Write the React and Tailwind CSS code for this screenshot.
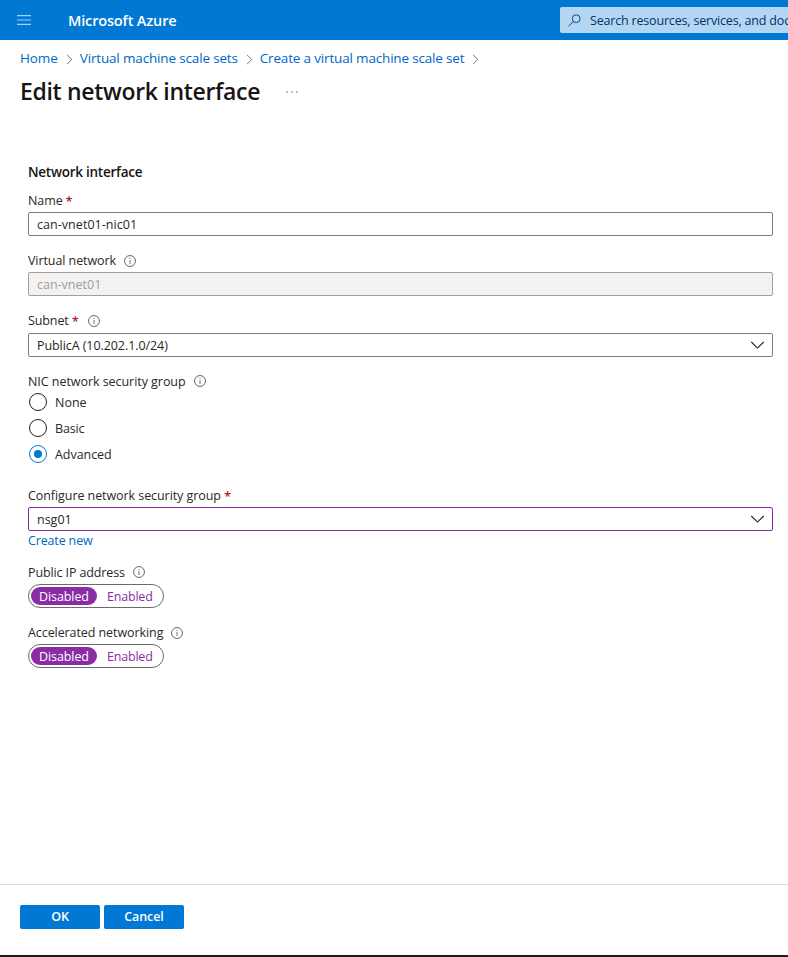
import React from "react";

function InfoIcon({ className = "" }) {
  return (
    <svg className={`h-3 w-3 shrink-0 ${className}`} viewBox="0 0 12 12" fill="none">
      <circle cx="6" cy="6" r="5.45" stroke="#605e5c" strokeWidth="0.95" />
      <path d="M6 5V9" stroke="#8a8886" strokeWidth="1.2" />
      <path d="M6 3V4" stroke="#8a8886" strokeWidth="1.2" />
    </svg>
  );
}

function Crumb({ children, className }) {
  return (
    <a className="flex items-center">
      <span className={`text-[13.5px] text-[#0067c5] ${className}`}>{children}</span>
      <svg className="mt-0.5 ml-2 mr-[7px] h-[11px] w-[7px]" viewBox="0 0 7 11" fill="none">
        <path d="M1 0.8L5.8 5.5L1 10.2" stroke="#706e6c" strokeWidth="0.95" />
      </svg>
    </a>
  );
}

function Label({ children, tracking, required, info, iconShift = "mt-[2px]" }) {
  return (
    <div className="flex h-6 items-center">
      <span className={`pt-[2px] ${tracking}`}>{children}</span>
      {required && <span className="ml-[3px] pt-[2px] text-[13px] font-semibold text-[#a4262c]">*</span>}
      {info && <InfoIcon className={`${iconShift} ${required ? "ml-[9px]" : "ml-2"}`} />}
    </div>
  );
}

function Field({ children, className, tracking, select }) {
  return (
    <div className={`flex h-6 items-center justify-between rounded-[2px] border pr-[7px] pl-2 ${className}`}>
      <span className={`pt-[2px] ${tracking}`}>{children}</span>
      {select && (
        <svg className="h-[8px] w-[15px]" viewBox="0 0 15 8" fill="none">
          <path d="M1.3 1L7.5 7.1L13.7 1" stroke="#201f1e" strokeWidth="1.1" />
        </svg>
      )}
    </div>
  );
}

function Radio({ children, checked, tracking }) {
  return (
    <div className="flex h-[26px] items-center">
      <span
        className={`ml-[1px] mr-2 flex h-[18px] w-[18px] items-center justify-center rounded-full border ${
          checked ? "border-[#0078d4]" : "border-[#201f1e]"
        }`}
      >
        {checked && <span className="h-2 w-2 rounded-full bg-[#0078d4]" />}
      </span>
      <span className={`pt-[2px] ${tracking}`}>{children}</span>
    </div>
  );
}

function Toggle() {
  return (
    <div className="flex h-6 w-[136px] items-center rounded-full border border-[#6e6c6a] pl-[2px]">
      <span className="flex h-[18px] w-[66px] items-center justify-center rounded-full bg-[#8a2da5] text-white">
        <span className="pt-[2px] tracking-[-0.1px]">Disabled</span>
      </span>
      <span className="ml-[10px] pt-[2px] text-[#8a2da5] tracking-[-0.2px]">Enabled</span>
    </div>
  );
}

export default function App() {
  return (
    <div className="flex h-[957px] w-[788px] flex-col overflow-hidden bg-white font-['Open_Sans','Noto_Sans',sans-serif] text-[12.5px] leading-6 whitespace-nowrap text-[#292827]">
      <header className="flex h-10 shrink-0 items-center bg-[#0078d4]">
        <svg className="ml-[17px] h-[10px] w-[14px] shrink-0" viewBox="0 0 14 10" fill="none">
          <path d="M0 0.6H14M0 5H14M0 9.4H14" stroke="#a5d0f1" strokeWidth="1.2" />
        </svg>
        <span className="ml-[37px] w-[492px] shrink-0 pt-[2px] text-[14.5px] font-semibold tracking-[-0.15px] text-white">Microsoft Azure</span>
        <div className="flex h-[26px] w-[228px] shrink-0 items-center rounded-l-[2px] bg-[#b3d7f2] text-[#00326b]">
          <svg className="ml-[8px] mr-[9px] h-[13px] w-[13px] shrink-0" viewBox="0 0 13 13" fill="none">
            <circle cx="8.2" cy="4.7" r="3.9" stroke="#00468b" strokeWidth="0.95" />
            <path d="M5.3 7.5L0.5 12.4" stroke="#00468b" strokeWidth="1" />
          </svg>
          <span className="pt-px tracking-[-0.18px]">Search resources, services, and doc</span>
        </div>
      </header>

      <nav className="mt-[6px] ml-5 flex h-6 shrink-0 items-center">
        <Crumb className="tracking-[-0.1px]">Home</Crumb>
        <Crumb className="tracking-[-0.16px]">Virtual machine scale sets</Crumb>
        <Crumb className="tracking-[-0.17px]">Create a virtual machine scale set</Crumb>
      </nav>

      <div className="ml-5 flex h-11 shrink-0 items-center">
        <h1 className="w-[266px] pb-[2px] text-[23px] font-semibold tracking-[-0.32px] text-[#161514]">Edit network interface</h1>
        <svg className="h-[2px] w-[12px]" viewBox="0 0 12 2">
          <path d="M0.5 0.4H1.7V1.6H0.5ZM5.3 0.4H6.5V1.6H5.3ZM10.1 0.4H11.3V1.6H10.1Z" fill="#403e3c" />
        </svg>
      </div>

      <main className="mt-[46px] mr-[15px] ml-7 flex flex-col">
        <h2 className="h-6 text-[13.5px] font-semibold tracking-[-0.25px] text-[#161514]">Network interface</h2>
        <div className="mt-1">
          <Label tracking="tracking-[-0.1px]" required>Name</Label>
          <Field tracking="tracking-[0.05px]" className="border-[#7f7d7b]">can-vnet01-nic01</Field>
        </div>
        <div className="mt-3">
          <Label tracking="tracking-[-0.08px]" info>Virtual network</Label>
          <Field tracking="tracking-[0px]" className="border-[#a19f9d] bg-[#f3f2f1] text-[#a19f9d]">can-vnet01</Field>
        </div>
        <div className="mt-3">
          <Label tracking="tracking-[-0.1px]" required info>Subnet</Label>
          <Field tracking="tracking-[-0.07px]" select className="mt-px border-[#7f7d7b]">PublicA (10.202.1.0/24)</Field>
        </div>
        <div className="mt-3">
          <Label tracking="tracking-[-0.05px]" info iconShift="mt-0">NIC network security group</Label>
          <div className="-mt-1">
            <Radio tracking="tracking-[0px]">None</Radio>
            <Radio tracking="tracking-[-0.15px]">Basic</Radio>
            <Radio tracking="tracking-[-0.05px]" checked>Advanced</Radio>
          </div>
        </div>
        <div className="mt-4">
          <Label tracking="tracking-[-0.07px]" required>Configure network security group</Label>
          <Field tracking="tracking-[0px]" select className="border-[#8a2da5]">nsg01</Field>
          <a className="block h-[18px] leading-[20px] text-[#0067c5] tracking-[-0.15px]">Create new</a>
        </div>
        <div className="mt-[11px]">
          <Label tracking="tracking-[-0.12px]" info iconShift="mt-0">Public IP address</Label>
          <Toggle />
        </div>
        <div className="mt-3">
          <Label tracking="tracking-[-0.08px]" info>Accelerated networking</Label>
          <Toggle />
        </div>
      </main>

      <footer className="mt-auto flex h-[73px] shrink-0 gap-1 border-t border-b-2 border-t-[#dcdcdc] border-b-[#1d1c1c] pt-5 pl-5 text-[12.5px] font-semibold text-white">
        <button className="h-6 w-20 rounded-[2px] bg-[#0078d4] leading-6 tracking-[-0.1px]">OK</button>
        <button className="h-6 w-20 rounded-[2px] bg-[#0078d4] leading-6 tracking-[-0.1px]">Cancel</button>
      </footer>
    </div>
  );
}
